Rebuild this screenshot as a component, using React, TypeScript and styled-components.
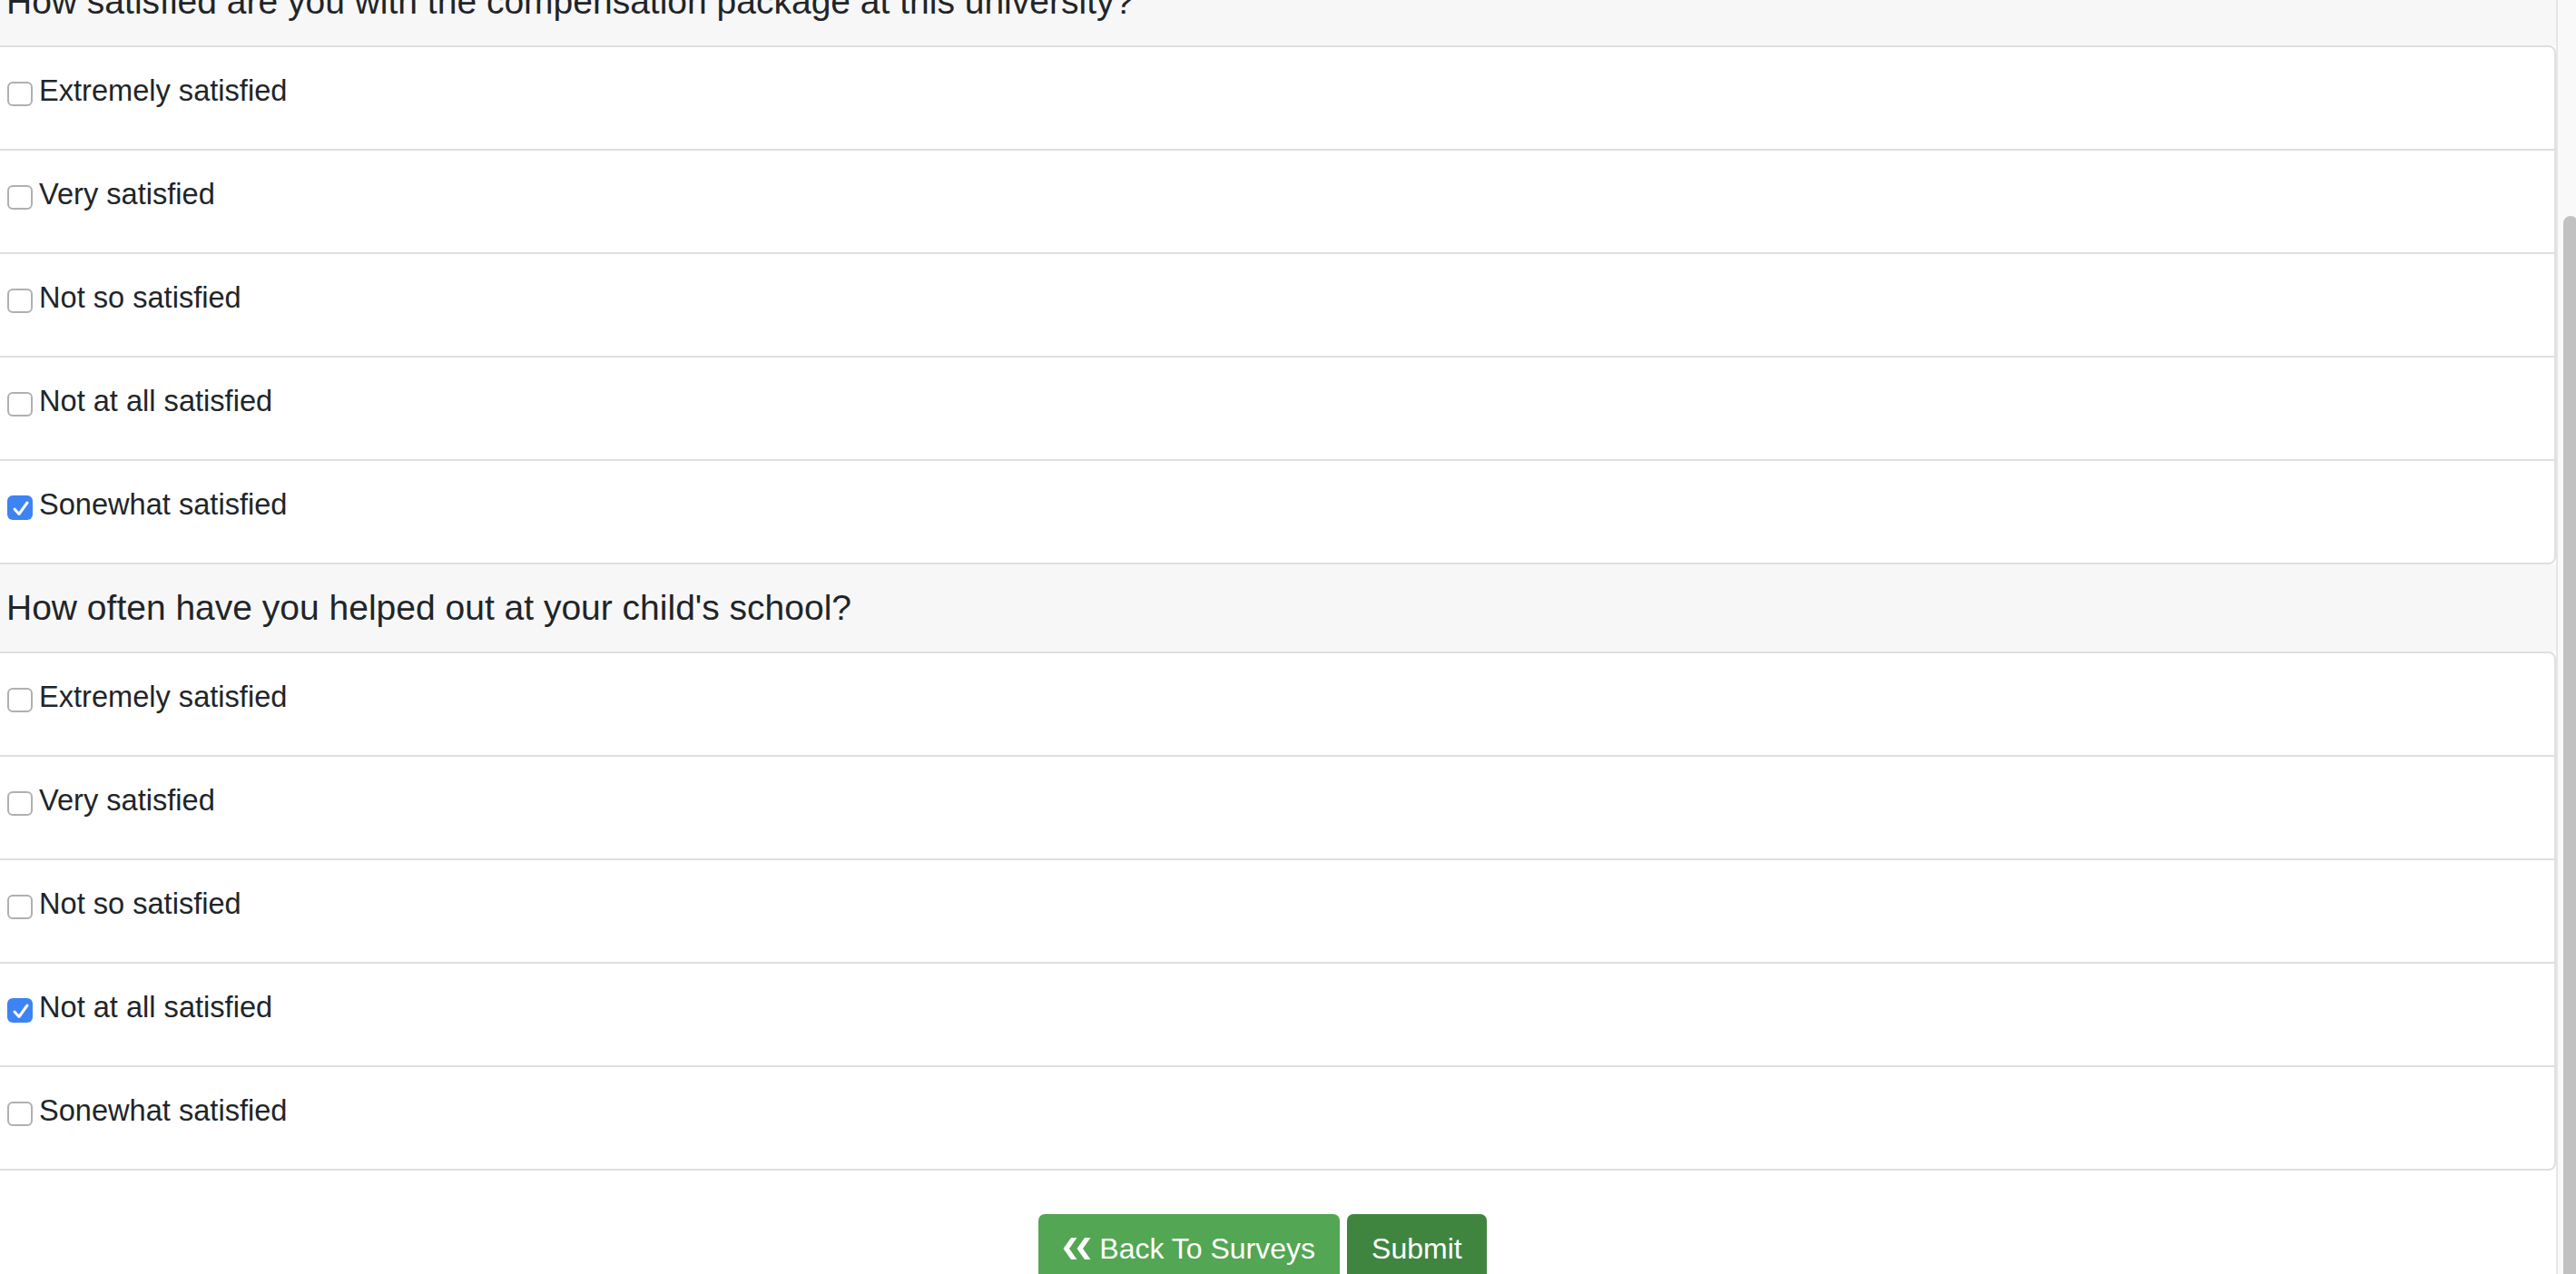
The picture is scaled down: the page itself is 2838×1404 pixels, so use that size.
import React from "react";
import styled, { createGlobalStyle } from "styled-components";

const GlobalStyle = createGlobalStyle`
  html, body { margin: 0; padding: 0; background: #fff; }
  body {
    font-family: "Liberation Sans", Arial, sans-serif;
    color: #212529;
    overflow: hidden;
  }
  * { box-sizing: border-box; }
`;

const Page = styled.div`
  display: flex;
  width: 2838px;
  height: 1404px;
  overflow: hidden;
`;

const Main = styled.main`
  flex: 1;
  min-width: 0;
  margin-top: -46px;
`;

const QuestionHeader = styled.h2`
  margin: 0;
  height: 96px;
  display: flex;
  align-items: center;
  padding-left: 7px;
  background: #f7f7f7;
  font-size: 39px;
  font-weight: 400;
  color: #212529;
`;

const OptionList = styled.ul`
  list-style: none;
  margin: 0;
  padding: 0;
  background: #fff;
  border: 2px solid #dfdfdf;
  border-left: none;
  border-radius: 0 8px 8px 0;
`;

const OptionRow = styled.li`
  height: 112px;
  display: flex;
  align-items: center;
  padding: 0 0 10px 8px;

  & + & {
    height: 114px;
    border-top: 2px solid #dfdfdf;
  }
`;

const CheckBox = styled.span<{ $checked: boolean }>`
  flex: none;
  width: 28px;
  height: 27px;
  border-radius: 6px;
  display: flex;
  align-items: center;
  justify-content: center;
  background: ${(p) => (p.$checked ? "#3d83f3" : "#fff")};
  border: ${(p) => (p.$checked ? "none" : "2px solid #b0b0b0")};
`;

const OptionLabel = styled.span`
  margin-left: 7px;
  margin-bottom: 6px;
  font-size: 32.6px;
  color: #212529;
`;

const Actions = styled.div`
  display: flex;
  justify-content: center;
  gap: 8px;
  margin-top: 48px;
  padding-right: 34px;
`;

const Button = styled.button<{ $variant: "back" | "submit" }>`
  display: inline-flex;
  align-items: center;
  gap: 9px;
  padding: 14px 27px;
  font-family: "Liberation Sans", Arial, sans-serif;
  font-size: 32px;
  line-height: 1.5;
  color: #fff;
  border: none;
  border-radius: 7px;
  background: ${(p) => (p.$variant === "back" ? "#53a653" : "#3f853f")};
`;

const ScrollTrack = styled.div`
  flex: none;
  width: 22px;
  height: 100%;
  background: #f9f9f9;
  border-left: 2px solid #e6e6e6;
  padding: 238px 0 0 6px;
  overflow: hidden;
`;

const ScrollThumb = styled.div`
  width: 16px;
  height: 100%;
  background: #c1c1c1;
  border-radius: 8px 8px 0 0;
`;

const CheckMark = () => (
  <svg width="28" height="27" viewBox="0 0 28 27">
    <polyline
      points="8,15 13,20.5 22,8"
      fill="none"
      stroke="#fff"
      strokeWidth="3"
      strokeLinecap="round"
      strokeLinejoin="round"
    />
  </svg>
);

const DoubleChevron = () => (
  <svg width="31" height="24" viewBox="0 0 31 24">
    <polygon points="9,0 15.5,0 7,12 15.5,24 9,24 0.5,12" fill="#fff" />
    <polygon points="24,0 30.5,0 22,12 30.5,24 24,24 15.5,12" fill="#fff" />
  </svg>
);

const OPTIONS = [
  "Extremely satisfied",
  "Very satisfied",
  "Not so satisfied",
  "Not at all satisfied",
  "Sonewhat satisfied",
];

const QUESTIONS = [
  {
    text: "How satisfied are you with the compensation package at this university?",
    checked: 4,
  },
  { text: "How often have you helped out at your child's school?", checked: 3 },
];

export default function App() {
  return (
    <>
      <GlobalStyle />
      <Page>
        <Main>
          {QUESTIONS.map((q) => (
            <section key={q.text}>
              <QuestionHeader>{q.text}</QuestionHeader>
              <OptionList>
                {OPTIONS.map((o, i) => (
                  <OptionRow key={o}>
                    <CheckBox $checked={i === q.checked}>
                      {i === q.checked && <CheckMark />}
                    </CheckBox>
                    <OptionLabel>{o}</OptionLabel>
                  </OptionRow>
                ))}
              </OptionList>
            </section>
          ))}
          <Actions>
            <Button $variant="back">
              <DoubleChevron />
              Back To Surveys
            </Button>
            <Button $variant="submit">Submit</Button>
          </Actions>
        </Main>
        <ScrollTrack>
          <ScrollThumb />
        </ScrollTrack>
      </Page>
    </>
  );
}
